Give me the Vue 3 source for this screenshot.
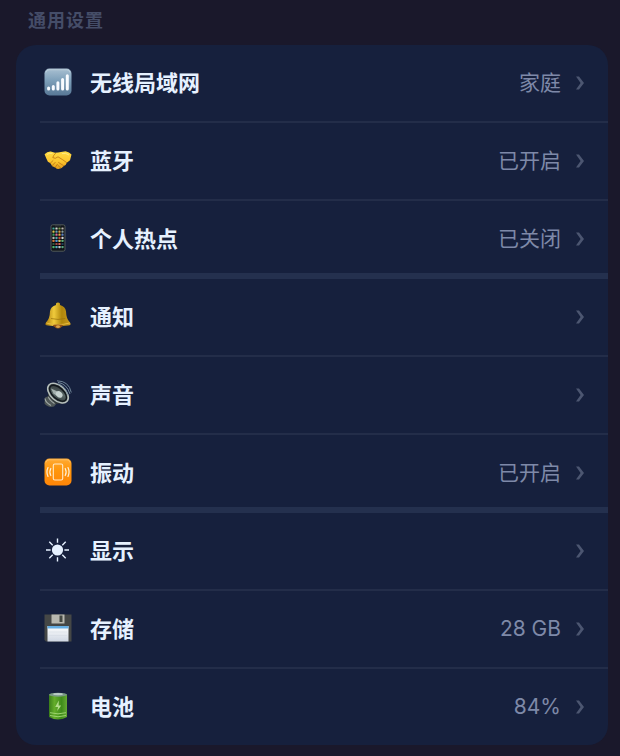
<template>
    <section class="settings">
        <h2 class="settings-title">通用设置</h2>

        <ul class="card">
            <li v-for="item in items" :key="item.id" class="item">
                <button
                    type="button"
                    class="row"
                    :class="{ 'row-group-end': item.groupEnd, 'row-last': item.last }"
                >
                    <svg v-if="item.id === 'wifi'" class="icon" viewBox="0 0 28 28" aria-hidden="true">
                        <defs>
                            <linearGradient id="wifi-bg" x1="0" y1="0" x2="0" y2="1">
                                <stop offset="0" stop-color="#a9c0d2" />
                                <stop offset="0.45" stop-color="#7d9fb9" />
                                <stop offset="1" stop-color="#587896" />
                            </linearGradient>
                        </defs>
                        <rect x="0.5" y="0.5" width="27" height="27" rx="5" fill="url(#wifi-bg)" />
                        <path d="M2 4.500Q2.600 1.800 5 1.800H23Q25.400 1.800 26 4.500" fill="none" stroke="#bfd0dc" stroke-width="0.8" />
                        <path
                            d="M4.600 20v1M9.300 18.400v2.600M13.900 14.800v6.200M18.600 11.400v9.600M23.300 7.800v13.200"
                            stroke="#f8fbff"
                            stroke-width="3"
                            stroke-linecap="round"
                        />
                    </svg>

                    <svg v-else-if="item.id === 'bluetooth'" class="icon" viewBox="0 0 28 28" aria-hidden="true">
                        <defs>
                            <linearGradient id="hand-fill" x1="0" y1="0" x2="0" y2="1">
                                <stop offset="0" stop-color="#ffdc45" />
                                <stop offset="0.6" stop-color="#fcc42d" />
                                <stop offset="1" stop-color="#e29a19" />
                            </linearGradient>
                        </defs>
                        <path
                            d="M0.600 8.200Q3.200 5.200 6.700 5.400L11 6.700 14 6.400 17 6.100 21.500 5.300Q25.500 6 27.500 8.500L26 14.300 22.800 16.700Q22 19.300 19.800 20Q18 22.700 14.500 22.900Q12.700 23.100 11.400 21.400L8.200 20.300 6.500 17.200 3.900 15.800Q2 12 0.600 8.200Z"
                            fill="url(#hand-fill)"
                        />
                        <path
                            d="M11.500 7.300Q9 9.800 8.800 11.600Q11.200 13.400 14 10.800Q18.600 13.500 22.700 16.600M6.300 17.200L9 14.600M8.300 19.600L11.200 16.400M11.200 21.500L13.300 18.400M14.600 16.500L19.500 19.600M13.800 19.300L16.700 21.900"
                            fill="none"
                            stroke="#bd7613"
                            stroke-width="0.8"
                            stroke-linecap="round"
                        />
                        <path d="M3 8.400Q5.500 6.800 8.500 7.400M18 7.600Q22 6.700 25 9" fill="none" stroke="#ffeb80" stroke-width="1" />
                    </svg>

                    <svg v-else-if="item.id === 'hotspot'" class="icon" viewBox="0 0 28 28" aria-hidden="true">
                        <rect x="7" y="0.8" width="14" height="26.400" rx="1.800" fill="#11151b" stroke="#59615f" stroke-width="0.9" />
                        <rect x="8" y="3" width="12" height="22" fill="#07090e" />
                        <g v-for="(line, y) in appColors" :key="y">
                            <rect
                                v-for="(color, x) in line"
                                :key="x"
                                :x="8.400 + x * 3"
                                :y="3.400 + y * 3.100"
                                width="2.200"
                                height="2.200"
                                rx="0.4"
                                :fill="color"
                            />
                        </g>
                        <path d="M11 1.900h6" stroke="#49515b" stroke-width="0.6" />
                    </svg>

                    <svg v-else-if="item.id === 'notice'" class="icon" viewBox="0 0 28 28" aria-hidden="true">
                        <defs>
                            <linearGradient id="bell-fill" x1="0" y1="0" x2="1" y2="0">
                                <stop offset="0" stop-color="#ab7b09" />
                                <stop offset="0.34" stop-color="#f0cb3c" />
                                <stop offset="0.65" stop-color="#b0860b" />
                                <stop offset="1" stop-color="#c99a20" />
                            </linearGradient>
                        </defs>
                        <ellipse cx="14" cy="24" rx="3.500" ry="2.400" fill="#9d5c15" />
                        <path
                            d="M12 3Q11.500 0.600 14 0.500Q16.500 0.600 16 3Q21.200 4.400 22 9.300Q22.200 17.200 26 20.400Q28 23.200 23.800 23.600Q14 25.200 4.200 23.600Q0 23.200 2 20.400Q5.800 17.200 6 9.300Q6.800 4.400 12 3Z"
                            fill="url(#bell-fill)"
                        />
                        <path d="M2.300 21Q14 24.300 25.700 21" fill="none" stroke="#e5bb41" stroke-width="1" />
                        <path d="M7 16.500Q14 18.400 21.300 16.500" fill="none" stroke="#96700e" stroke-width="0.7" />
                        <ellipse cx="14" cy="23.700" rx="5" ry="1.100" fill="#955213" />
                        <ellipse cx="14" cy="24.600" rx="2" ry="1.400" fill="#d9a34a" />
                    </svg>

                    <svg v-else-if="item.id === 'sound'" class="icon" viewBox="0 0 28 28" aria-hidden="true">
                        <defs>
                            <linearGradient id="cone-fill" x1="0" y1="0" x2="1" y2="1">
                                <stop offset="0" stop-color="#1d2224" />
                                <stop offset="0.55" stop-color="#5b6968" />
                                <stop offset="1" stop-color="#1a2226" />
                            </linearGradient>
                        </defs>
                        <path d="M1 17.500L7 15 14 22 10 26.500Q4 28 0.500 23.500Z" fill="#4e5656" />
                        <path d="M1 18.500Q1.500 22.500 7 25.500M4.500 16.500Q5 20 10.500 23.500" fill="none" stroke="#a1a9a6" stroke-width="1.200" />
                        <path d="M4.500 5L4 16 12 24 21.500 23Z" fill="#303738" />
                        <ellipse cx="14" cy="13.200" rx="12.200" ry="7.400" transform="rotate(42 14 13.200)" fill="url(#cone-fill)" stroke="#b6bfbc" stroke-width="1.500" />
                        <ellipse cx="14" cy="13.200" rx="10.200" ry="5.500" transform="rotate(42 14 13.200)" fill="none" stroke="#12181d" stroke-width="1.400" />
                        <path d="M7 8.500L13.500 11.500 15 17.500 9.500 13.500Z" fill="#a4b0ae" />
                        <ellipse cx="15.200" cy="14.400" rx="3.700" ry="2.800" transform="rotate(42 15.200 14.400)" fill="#c4d0ce" />
                        <path d="M14 4Q21 5.500 24 15M14 2.400Q23 3.800 26 14M13 0.800Q25 1 27.300 12.500" fill="none" stroke="#7890a2" stroke-width="0.9" />
                    </svg>

                    <svg v-else-if="item.id === 'vibrate'" class="icon" viewBox="0 0 28 28" aria-hidden="true">
                        <defs>
                            <linearGradient id="vibrate-bg" x1="0" y1="0" x2="0" y2="1">
                                <stop offset="0" stop-color="#ffab35" />
                                <stop offset="0.4" stop-color="#ff970d" />
                                <stop offset="1" stop-color="#ff8507" />
                            </linearGradient>
                        </defs>
                        <rect x="0.5" y="0.5" width="27" height="27" rx="5" fill="url(#vibrate-bg)" />
                        <path d="M2 4.500Q2.600 1.800 5 1.800H23Q25.400 1.800 26 4.500" fill="none" stroke="#ffc168" stroke-width="0.8" />
                        <rect x="9.300" y="6" width="9.400" height="16" rx="1.500" fill="none" stroke="#ffe9c8" stroke-width="1.100" />
                        <path
                            d="M6.800 10.500Q4.900 14 6.800 17.500M4 9.500Q1.900 14 4 18.500M21.200 10.500Q23.100 14 21.200 17.500M24 9.500Q26.100 14 24 18.500"
                            fill="none"
                            stroke="#fff0d8"
                            stroke-width="1.200"
                            stroke-linecap="round"
                        />
                    </svg>

                    <svg v-else-if="item.id === 'display'" class="icon" viewBox="0 0 28 28" aria-hidden="true">
                        <circle cx="13.500" cy="14" r="5.600" fill="#e6f1ff" />
                        <path
                            d="M13.500 2.400v4.400M13.500 21.200v4.400M2 14h4.600M20.400 14H25M5.300 5.800l3.400 3.400M18.300 18.800l3.400 3.400M21.700 5.800l-3.400 3.400M8.700 18.800l-3.400 3.400"
                            stroke="#e6f1ff"
                            stroke-width="1.400"
                        />
                    </svg>

                    <svg v-else-if="item.id === 'storage'" class="icon" viewBox="0 0 28 28" aria-hidden="true">
                        <defs>
                            <linearGradient id="disk-label" x1="0" y1="0" x2="0" y2="1">
                                <stop offset="0" stop-color="#ffffff" />
                                <stop offset="1" stop-color="#cfd7e3" />
                            </linearGradient>
                        </defs>
                        <path d="M0.500 0.500H27.500V27.500H2L0.500 26Z" fill="#454746" />
                        <rect x="7.500" y="0.500" width="13" height="9" fill="#b8b8b0" />
                        <rect x="15.500" y="1.500" width="3" height="6.500" fill="#444843" />
                        <rect x="3.500" y="12" width="21" height="15.500" fill="url(#disk-label)" />
                        <rect x="3.500" y="12" width="21" height="2.500" fill="#65aee4" />
                        <path d="M5 18h18M5 21.500h18" stroke="#d2d9e2" stroke-width="0.5" />
                    </svg>

                    <svg v-else class="icon" viewBox="0 0 28 28" aria-hidden="true">
                        <defs>
                            <linearGradient id="battery-fill" x1="0" y1="0" x2="1" y2="0">
                                <stop offset="0" stop-color="#397d19" />
                                <stop offset="0.3" stop-color="#64ad2a" />
                                <stop offset="0.7" stop-color="#3f8c1a" />
                                <stop offset="1" stop-color="#65a934" />
                            </linearGradient>
                        </defs>
                        <path d="M5 2.500H23V25Q14 30 5 25Z" fill="url(#battery-fill)" />
                        <ellipse cx="14" cy="2.700" rx="9" ry="2" fill="#7a9a85" />
                        <ellipse cx="14" cy="2.100" rx="5" ry="1.200" fill="#b9cbc5" />
                        <path d="M14.800 8.500L11.200 15H14L13.200 19 17.200 13.500H14.600Z" fill="#b4dd8c" />
                        <path d="M6 20.700Q14 23 22 20.700M6 23.500Q14 26 22 23.500" fill="none" stroke="#9cd26f" stroke-width="1" />
                    </svg>

                    <span class="label">{{ item.label }}</span>
                    <span class="value">{{ item.value }}</span>
                    <svg class="chevron" viewBox="0 0 10 14" aria-hidden="true">
                        <path d="M1 0.500H4L9 7 4 13.500H1L5.600 7Z" />
                    </svg>
                </button>
            </li>
        </ul>
    </section>
</template>


<script setup>
const items = [
    { id: 'wifi', label: '无线局域网', value: '家庭' },
    { id: 'bluetooth', label: '蓝牙', value: '已开启' },
    { id: 'hotspot', label: '个人热点', value: '已关闭', groupEnd: true },
    { id: 'notice', label: '通知' },
    { id: 'sound', label: '声音' },
    { id: 'vibrate', label: '振动', value: '已开启', groupEnd: true },
    { id: 'display', label: '显示' },
    { id: 'storage', label: '存储', value: '28 GB' },
    { id: 'battery', label: '电池', value: '84%', last: true }
];

// Home screen of the phone icon
const appColors = [
    ['#43a897', '#d6d8d4', '#7a9c50', '#bdb8b1'],
    ['#d6c34e', '#65a4b0', '#d4a24f', '#8c9e9d'],
    ['#3e9d60', '#d66c9c', '#e1b540', '#6084c6'],
    ['#bbb9b3', '#50a9a8', '#c24e43', '#d5d7d2'],
    ['#c9743d', '#508fce', '#c9be68', '#5aa873'],
    ['#315743', '#9a4945', '#d65d55', '#223f55'],
    ['#4eb66b', '#56a8c0', '#bfc7cd', '#57a67e']
];
</script>


<style>
body {
    background: #1a182b;
}
</style>

<style scoped>
.settings {
    padding: 8px 12px 12px 16px;
    font-family: Inter, "Noto Sans CJK SC", sans-serif;
}

.settings-title {
    margin: 0 0 11px;
    padding-left: 12px;
    color: #454d68;
    font-size: 18px;
    font-weight: 600;
    line-height: 26px;
    letter-spacing: 1px;
}

.card {
    margin: 0;
    padding: 0;
    list-style: none;
    border-radius: 20px;
    background: #16203d;
}

.item {
    padding-left: 24px;
}

.row {
    display: flex;
    align-items: center;
    width: 100%;
    height: 78px;
    margin: 0;
    padding: 0 23px 2px 4px;
    border: 0;
    background: none;
    box-shadow: inset 0 -2px #232d49;
    font-family: inherit;
    text-align: left;
    cursor: pointer;
}

.row-group-end {
    box-shadow: inset 0 -6px #24304e;
}

.row-last {
    height: 76px;
    padding-bottom: 0;
    box-shadow: none;
}

.icon {
    flex: none;
    width: 28px;
    height: 28px;
    margin: 0 18px 2px 0;
}

.label {
    flex: 1;
    color: #e6f1ff;
    font-size: 22px;
    font-weight: 600;
    line-height: 32px;
}

.value {
    color: #7e89a8;
    font-size: 21px;
    line-height: 32px;
}

.chevron {
    flex: none;
    width: 10px;
    height: 14px;
    margin-left: 14px;
    fill: #4c5671;
}
</style>
